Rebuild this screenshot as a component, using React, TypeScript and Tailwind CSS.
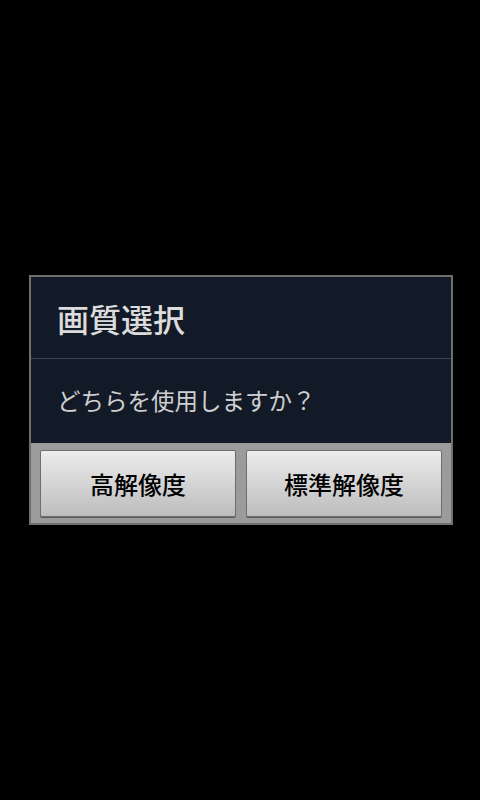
const font = { fontFamily: '"Noto Sans CJK JP", "Noto Sans", sans-serif' };

const DialogButton = ({ label }: { label: string }) => (
  <button className="flex h-[67px] w-[196px] items-center justify-center rounded-[2px] border border-[#6e6e6e] bg-gradient-to-b from-[#ececec] to-[#bdbdbd] text-[24px] font-medium text-black shadow-[0_1px_0_#5a5a5a]">
    {label}
  </button>
);

const App = () => {
  return (
    <div className="flex h-[800px] w-[480px] items-center bg-black pl-[29px]" style={font}>
      {/* Dialog */}
      <div className="flex h-[250px] w-[424px] flex-col border-2 border-[#6f6f6f] bg-[#131a27]">
        <div className="flex h-[81px] items-center px-[26px]">
          <h1 className="text-[32px] font-medium leading-none text-[#dcdcdc]">画質選択</h1>
        </div>
        <div className="h-px bg-[#3b4652]" />
        <div className="flex h-[84px] items-center px-[26px]">
          <p className="text-[23.5px] leading-none text-[#cfcfcf]">どちらを使用しますか？</p>
        </div>
        <div className="flex flex-1 items-start gap-[10px] bg-[#9b9b9b] px-[9px] pt-[7px]">
          <DialogButton label="高解像度" />
          <DialogButton label="標準解像度" />
        </div>
      </div>
    </div>
  );
};

export default App;
